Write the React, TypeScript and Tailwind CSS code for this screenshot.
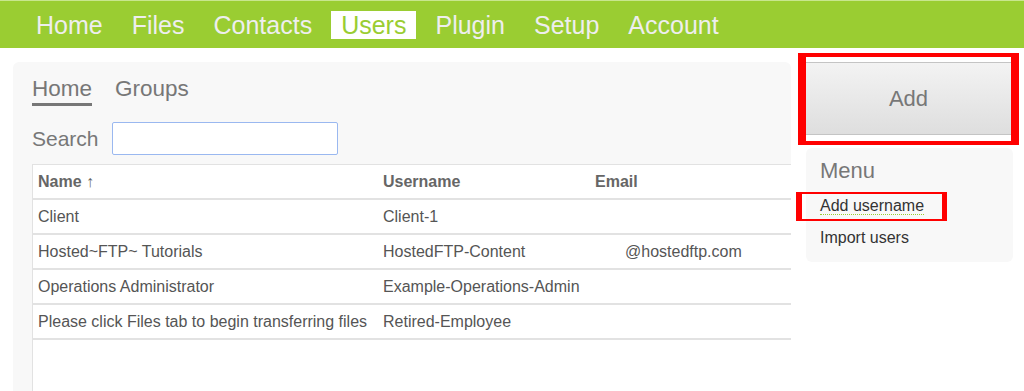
import React from "react";

interface UserRow {
  name: string;
  username: string;
  email: string;
}

const navItems = ["Home", "Files", "Contacts", "Users", "Plugin", "Setup", "Account"];

const users: UserRow[] = [
  { name: "Client", username: "Client-1", email: "" },
  { name: "Hosted~FTP~ Tutorials", username: "HostedFTP-Content", email: "@hostedftp.com" },
  { name: "Operations Administrator", username: "Example-Operations-Admin", email: "" },
  { name: "Please click Files tab to begin transferring files", username: "Retired-Employee", email: "" },
];

export default function App() {
  return (
    <div className="h-[391px] overflow-hidden bg-white font-['Liberation_Sans',Arial,sans-serif]">
      {/* top nav */}
      <div className="h-[48px] bg-[#9acd32] border-t border-[#c8e68e] flex items-center pl-[26px] gap-[9px]">
        {navItems.map((item) => (
          <span
            key={item}
            className={
              item === "Users"
                ? "px-[10px] h-[28px] leading-[28px] text-[25px] bg-white text-[#9acd32]"
                : "px-[10px] h-[28px] leading-[28px] text-[25px] text-[#eeeeee]"
            }
          >
            {item}
          </span>
        ))}
      </div>

      <div className="flex items-start">
        {/* main panel */}
        <div className="ml-[13px] mt-[14px] w-[778px] h-[340px] bg-[#f8f8f8] rounded-[6px] pl-[19px] pt-[14px]">
          <div className="flex gap-[23px] text-[22.5px] text-[#777] leading-[26px]">
            <span className="border-b-[3px] border-[#777] pb-[1px]">Home</span>
            <span>Groups</span>
          </div>
          <div className="flex items-center mt-[16px] gap-[13px]">
            <span className="text-[21px] text-[#777]">Search</span>
            <input className="w-[226px] h-[33px] bg-white border border-[#9ab8f0] rounded-[2px] outline-none" />
          </div>
          <div className="mt-[9px] bg-white border-l border-t border-[#e2e2e2] h-[240px]">
            <table className="w-full table-fixed text-[16px] text-[#555] border-collapse">
              <colgroup>
                <col className="w-[350px]" />
                <col className="w-[212px]" />
                <col />
              </colgroup>
              <thead>
                <tr className="border-b-2 border-[#e2e2e2] h-[34px]">
                  <th className="text-left font-bold text-[#666] pl-[5px] pt-[1px]">Name ↑</th>
                  <th className="text-left font-bold text-[#666] pt-[1px]">Username</th>
                  <th className="text-left font-bold text-[#666] pt-[1px]">Email</th>
                </tr>
              </thead>
              <tbody>
                {users.map((u) => (
                  <tr key={u.username} className="border-b-2 border-[#e2e2e2] h-[35px]">
                    <td className="pl-[5px] whitespace-nowrap">{u.name}</td>
                    <td className="whitespace-nowrap">{u.username}</td>
                    <td className="whitespace-nowrap pl-[30px]">{u.email}</td>
                  </tr>
                ))}
              </tbody>
            </table>
          </div>
        </div>

        {/* right column */}
        <div className="ml-[7px] mt-[5px] w-[221px]">
          <div className="border-[#ff0000] border-x-[8px] border-t-[4px] border-b-[4px] pt-[5px] pb-[6px] bg-white">
            <button className="w-full h-[73px] bg-gradient-to-b from-[#f3f3f3] to-[#dedede] border-t border-b border-[#c4c4c4] text-[22px] text-[#777]">
              Add
            </button>
          </div>
          <div className="relative mt-[3px] ml-[8px] w-[207px] h-[114px] bg-[#f8f8f8] rounded-[6px] pl-[14px] pt-[10px]">
            <div className="text-[22px] text-[#777] leading-[26px]">Menu</div>
            <div className="mt-[12px] text-[16px] text-[#333] leading-[19px]">
              <span className="border-b border-dotted border-[#9acd32]">Add username</span>
            </div>
            <div className="mt-[13px] text-[16px] text-[#333] leading-[19px]">Import users</div>
            {/* annotation box */}
            <div className="absolute left-[-10px] top-[44px] w-[151px] h-[29px] border-[#ff0000] border-l-[6px] border-r-[5px] border-y-[2px]" />
          </div>
        </div>
      </div>
    </div>
  );
}
